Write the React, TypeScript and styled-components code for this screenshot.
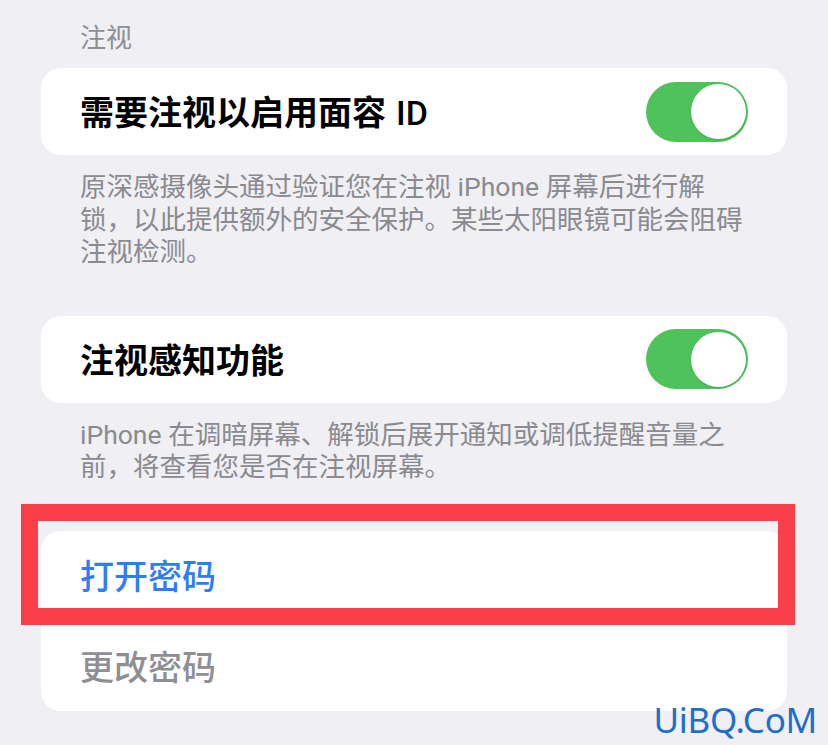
import React from "react";
import styled, { createGlobalStyle } from "styled-components";

const GlobalStyle = createGlobalStyle`
  html, body { margin: 0; padding: 0; background: #efeff4; }
  body { font-family: "Roboto", "Noto Sans CJK SC", sans-serif; }
`;

const Page = styled.div`
  position: relative;
  width: 828px;
  height: 745px;
  overflow: hidden;
  background: #efeff4;
  padding-top: 22px;
  box-sizing: border-box;
`;

const SectionHeader = styled.div`
  padding: 0 80px;
  font-size: 26px;
  line-height: 33px;
  color: #8e8e93;
  margin-bottom: 13px;
`;

const Card = styled.div<{ $mt?: number }>`
  position: relative;
  margin: ${(p) => p.$mt ?? 0}px 41px 0;
  background: #ffffff;
  border-radius: 20px;
`;

const Row = styled.div<{ $h: number; $sep?: boolean }>`
  height: ${(p) => p.$h}px;
  display: flex;
  align-items: center;
  justify-content: space-between;
  padding: 0 39px;
  box-sizing: border-box;
  border-bottom: ${(p) => (p.$sep ? "1px solid #e2e2e6" : "none")};
`;

const Label = styled.span<{ $color?: string; $weight?: number }>`
  font-size: 34px;
  line-height: 40px;
  font-weight: ${(p) => p.$weight ?? 600};
  color: ${(p) => p.$color ?? "#000"};
  font-family: "Noto Sans CJK SC", sans-serif;
`;

const Latin = styled.span`
  font-family: "Roboto", sans-serif;
  font-weight: 500;
  margin-left: 10px;
`;

const Toggle = styled.div`
  width: 102px;
  height: 60px;
  border-radius: 30px;
  background: #4fc25c;
  display: flex;
  align-items: center;
  justify-content: flex-end;
  padding: 0 2.5px;
  box-sizing: border-box;
`;

const Knob = styled.div`
  width: 55px;
  height: 55px;
  border-radius: 50%;
  background: #fff;
  box-shadow: 0 1px 3px rgba(0, 0, 0, 0.12);
`;

const Footer = styled.div`
  padding: 0 80px;
  margin-top: 16px;
  font-size: 26.5px;
  line-height: 32.5px;
  color: #8a8a8f;
`;

const Highlight = styled.div`
  position: absolute;
  left: -20px;
  top: -27px;
  width: 774px;
  height: 121px;
  border: 17px solid #f93f4a;
  box-sizing: border-box;
  pointer-events: none;
`;

const Watermark = styled.div`
  position: absolute;
  right: 11px;
  bottom: 4px;
  font-family: "Noto Sans", sans-serif;
  font-size: 35px;
  line-height: 42px;
  color: #1e6ec8;
  letter-spacing: -0.3px;
`;

const Switch = () => (
  <Toggle>
    <Knob />
  </Toggle>
);

export default function App() {
  return (
    <>
      <GlobalStyle />
      <Page>
        <SectionHeader>注视</SectionHeader>
        <Card>
          <Row $h={87}>
            <Label>
              需要注视以启用面容<Latin>ID</Latin>
            </Label>
            <Switch />
          </Row>
        </Card>
        <Footer>
          原深感摄像头通过验证您在注视 iPhone 屏幕后进行解锁，以此提供额外的安全保护。某些太阳眼镜可能会阻碍注视检测。
        </Footer>
        <Card $mt={47}>
          <Row $h={87}>
            <Label>注视感知功能</Label>
            <Switch />
          </Row>
        </Card>
        <Footer>iPhone 在调暗屏幕、解锁后展开通知或调低提醒音量之前，将查看您是否在注视屏幕。</Footer>
        <Card $mt={47}>
          <Row $h={90} $sep>
            <Label $color="#2f7cf6" $weight={500}>
              打开密码
            </Label>
          </Row>
          <Row $h={90}>
            <Label $color="#8e8e93" $weight={500}>
              更改密码
            </Label>
          </Row>
          <Highlight />
        </Card>
        <Watermark>UiBQ.CoM</Watermark>
      </Page>
    </>
  );
}
